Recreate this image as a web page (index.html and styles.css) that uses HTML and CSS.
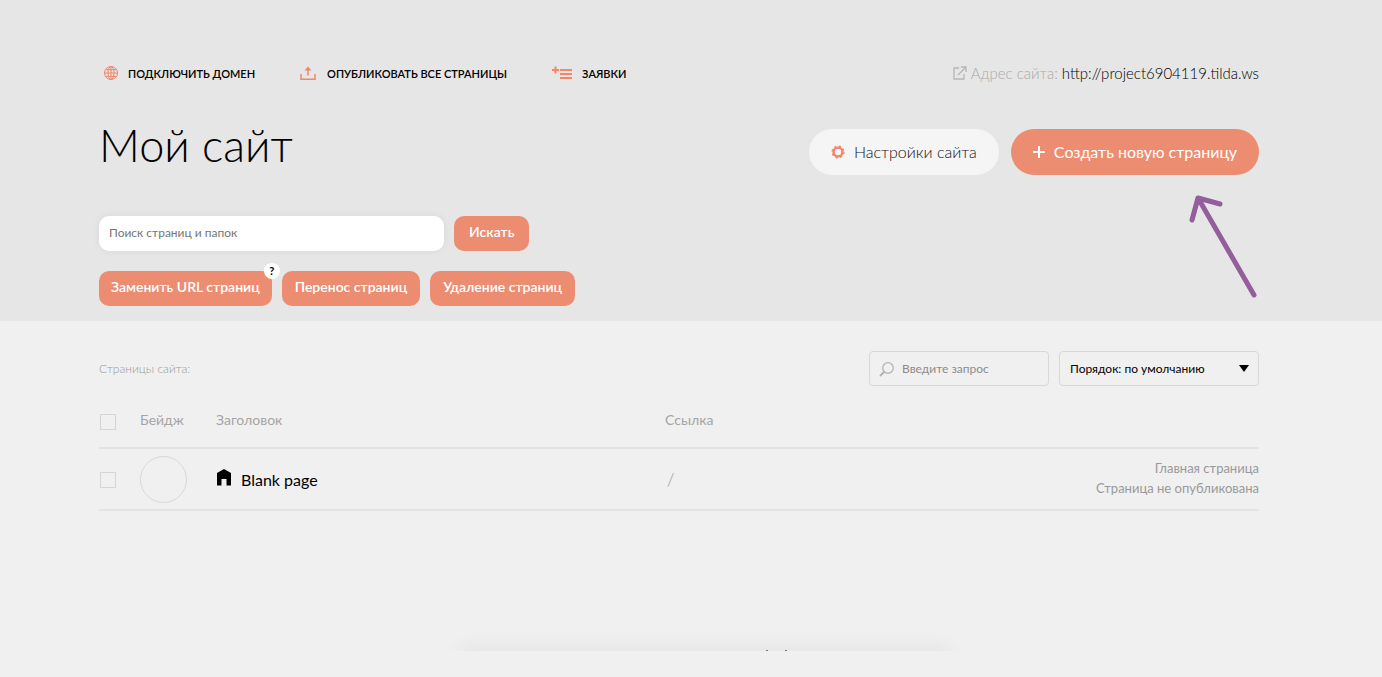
FILE: index.html
```html
<!DOCTYPE html>
<html lang="ru">
<head>
<meta charset="utf-8">
<meta name="viewport" content="width=device-width, initial-scale=1">
<title>Мой сайт</title>
<link rel="stylesheet" href="styles.css">
</head>
<body>
<header class="header">
  <div class="topbar">
    <nav class="nav">
      <a class="nav-link" href="#domain">
        <svg width="24" height="16" viewBox="0 0 24 16" fill="none" stroke="#f0876a"><circle cx="12" cy="8" r="6.500"/><ellipse cx="12" cy="8" rx="3" ry="6.500"/><path d="M12 1.500v13M5.500 8h13M6.500 4.700h11M6.500 11.300h11"/></svg>
        Подключить домен
      </a>
      <a class="nav-link nav-link-publish" href="#publish">
        <svg width="16" height="16" viewBox="0 0 16 16" fill="none" stroke="#f0876a" stroke-width="1.500"><path d="M1 9v5.200h14V9M8 10.500V3"/><path d="M4.500 5.500 8 1.500l3.500 4z" fill="#f0876a" stroke="none"/></svg>
        Опубликовать все страницы
      </a>
      <a class="nav-link nav-link-leads" href="#leads">
        <svg width="20" height="16" viewBox="0 0 20 16" fill="none" stroke="#f58468" stroke-width="2"><path d="M0 5h7M3.500 1.500v7M8 5h12M8 9h12M8 13h12"/></svg>
        Заявки
      </a>
    </nav>
    <div class="address">
      <svg width="14" height="14" viewBox="0 0 14 14" fill="none" stroke="#b6b6b6" stroke-width="1.300"><path d="M6 2H1v11h10V8M8 1h5v5M13 1 5 9"/></svg>
      <span class="address-label">Адрес сайта:</span>
      <a class="address-link" href="http://project6904119.tilda.ws">http://project6904119.tilda.ws</a>
    </div>
  </div>
  <div class="heading">
    <h1 class="title">Мой сайт</h1>
    <div class="actions">
      <button class="pill pill-light" type="button">
        <svg width="14" height="14" viewBox="0 0 14 14" fill="none" stroke="#f58468"><circle cx="7" cy="7" r="4.400" stroke-width="2.400"/><circle cx="7" cy="7" r="5.900" stroke-width="1.200" stroke-dasharray="2.320 2.314"/></svg>
        <span class="pill-text">Настройки сайта</span>
      </button>
      <button class="pill pill-accent" type="button">
        <svg width="12" height="12" viewBox="0 0 12 12" stroke="#fff" stroke-width="2"><path d="M0 6h12M6 0v12"/></svg>
        <span class="pill-text">Создать новую страницу</span>
      </button>
      <svg class="pointer" width="70" height="106" viewBox="0 0 70 106" fill="none" stroke="#935e9b" stroke-width="5" stroke-linecap="round" stroke-linejoin="round"><path d="M65 101 9 4M3 26 9 4l22 6"/></svg>
    </div>
  </div>
  <form class="search">
    <input class="search-input" type="search" aria-label="Поиск страниц и папок" placeholder="Поиск страниц и папок">
    <button class="btn btn-search" type="button">Искать</button>
  </form>
  <div class="tools">
    <div class="tool">
      <button class="btn" type="button">Заменить URL страниц</button>
      <span class="hint">?</span>
    </div>
    <button class="btn btn-wide" type="button">Перенос страниц</button>
    <button class="btn btn-wide" type="button">Удаление страниц</button>
  </div>
</header>
<main class="main">
  <div class="filters">
    <h2 class="subtitle">Страницы сайта:</h2>
    <label class="query">
      <svg width="16" height="16" viewBox="0 0 16 16" fill="none" stroke="#b4b4b4"><circle cx="9" cy="7" r="5.300" stroke-width="1.300"/><path d="M5.500 10.500 1 15" stroke-width="2"/></svg>
      <input class="query-input" type="text" aria-label="Введите запрос" placeholder="Введите запрос">
    </label>
    <div class="order">
      <select class="order-select" aria-label="Порядок"><option>Порядок: по умолчанию</option></select>
      <svg class="order-arrow" width="10" height="7" viewBox="0 0 10 7"><path d="M0 0h10L5 7z"/></svg>
    </div>
  </div>
  <table class="pages">
    <thead>
      <tr><th class="col-check"><input class="check" type="checkbox" aria-label="Выбрать все"></th><th class="col-badge">Бейдж</th><th class="col-title">Заголовок</th><th class="col-link">Ссылка</th><th></th></tr>
    </thead>
    <tbody>
      <tr>
        <td><input class="check" type="checkbox" aria-label="Выбрать страницу"></td>
        <td><div class="badge"></div></td>
        <td><a class="page-link" href="#page"><svg width="14" height="20" viewBox="0 0 14 20"><path d="M0 4 7 0l7 4v12.500H9.500V10h-5v6.500H0z"/></svg>Blank page</a></td>
        <td class="slug">/</td>
        <td class="status">Главная страница<br>Страница не опубликована</td>
      </tr>
    </tbody>
  </table>
</main>
<div class="sheet-edge">
  <div class="sheet-shadow"></div>
  <svg class="sheet-marks" width="24" height="2" viewBox="0 0 24 2" fill="#777"><path d="M1 1h2v1H1zM20 1h2v1h-2z"/></svg>
</div>
</body>
</html>
```
FILE: styles.css
```css
* { box-sizing: border-box; }
body {
  margin: 0;
  min-height: 100vh;
  display: flex;
  flex-direction: column;
  background: #f0f0f0;
  color: #000;
  font-family: Lato, "Open Sans", sans-serif;
  font-size: 14px;
}
a { color: inherit; text-decoration: none; }
button, input, select { font: inherit; }
svg { flex: none; }

.header { padding: 61px 123px 15px 99px; background: #e6e6e6; }
.topbar { display: flex; justify-content: space-between; height: 24px; }
.nav { display: flex; align-items: center; gap: 45px; }
.nav-link {
  display: flex;
  align-items: center;
  gap: 5px;
  font-size: 11px;
  font-weight: 600;
  text-transform: uppercase;
  white-space: nowrap;
}
.nav-link-publish { gap: 11px; }
.nav-link-leads { gap: 10px; }
.address { display: flex; align-items: center; gap: 4px; font-size: 15px; font-weight: 300; white-space: nowrap; }
.address-label { color: #aaa; }

.heading { display: flex; justify-content: space-between; margin-top: 44px; }
.title { margin: 0; font-size: 45px; line-height: 32px; font-weight: 300; white-space: nowrap; }
.actions { position: relative; display: flex; gap: 12px; }
.pill {
  display: flex;
  align-items: center;
  gap: 9px;
  height: 46px;
  padding: 0 22px;
  border: 0;
  border-radius: 23px;
  font-size: 16px;
  font-weight: 300;
  white-space: nowrap;
}
.pill-text { padding-bottom: 2px; }
.pill-light { background: #f5f5f5; color: #111; }
.pill-accent { background: #ec8d72; color: #fff; font-weight: 400; }
.pointer { position: absolute; right: 0; top: 65px; }

.search { display: flex; gap: 10px; margin-top: 41px; }
.search-input {
  width: 345px;
  height: 35px;
  padding: 0 10px 3px;
  border: 0;
  border-radius: 10px;
  background: #fff;
  box-shadow: 0 0 8px rgba(0, 0, 0, .06);
  font-size: 12px;
  appearance: none;
}
.search-input::placeholder { color: #757575; }
.btn {
  height: 35px;
  padding: 0 12px 4px;
  border: 0;
  border-radius: 10px;
  background: #ec8d72;
  color: #fff;
  font-size: 14px;
  font-weight: 600;
  white-space: nowrap;
}
.btn-search { padding: 0 15px 4px; }
.btn-wide { padding: 0 13px 4px; }
.tools { display: flex; gap: 10px; margin-top: 20px; }
.tool { position: relative; }
.hint {
  position: absolute;
  top: -8px;
  right: -8px;
  width: 16px;
  height: 16px;
  border-radius: 50%;
  background: #fff;
  font-size: 11px;
  line-height: 16px;
  font-weight: 700;
  text-align: center;
}

.main { padding: 30px 123px 0 99px; }
.filters { display: flex; align-items: center; gap: 10px; }
.subtitle { margin: 0 auto 0 0; font-size: 12px; font-weight: 300; color: #999; }
.query {
  display: flex;
  align-items: center;
  gap: 7px;
  width: 180px;
  height: 35px;
  padding: 0 9px;
  border: 1px solid #d8d8d8;
  border-radius: 4px;
}
.query-input { flex: 1; min-width: 0; padding: 0; border: 0; background: none; font-size: 12px; outline: 0; }
.query-input::placeholder { color: #8c8c8c; }
.order { position: relative; }
.order-select {
  display: block;
  width: 200px;
  height: 35px;
  padding: 0 10px;
  border: 1px solid #d8d8d8;
  border-radius: 4px;
  background: none;
  color: #000;
  font-size: 12px;
  appearance: none;
}
.order-arrow { position: absolute; right: 10px; top: 14px; pointer-events: none; }

.pages { width: 100%; margin-top: 11px; border-collapse: collapse; table-layout: fixed; }
.pages th { height: 51px; padding: 0 0 6px; border-bottom: 2px solid #e3e3e3; color: #a5a5a5; font-size: 14px; font-weight: 400; text-align: left; }
.pages td { height: 62px; padding: 0; border-bottom: 2px solid #e3e3e3; }
.col-check { width: 41px; }
.col-badge { width: 76px; }
.col-title { width: 449px; }
.check { appearance: none; display: block; width: 16px; height: 16px; margin: 2px 0 0 1px; border: 1px solid #d5d5d5; }
th .check { margin-top: 5px; }
.badge { width: 47px; height: 47px; border: 1px solid #d8d8d8; border-radius: 50%; }
.page-link { display: flex; align-items: center; gap: 10px; padding-left: 1px; font-size: 16px; }
.pages .slug { padding-left: 2px; color: #999; font-size: 17px; font-weight: 300; }
.pages .status { padding-bottom: 2px; color: #999; font-size: 13px; line-height: 20px; text-align: right; }

.sheet-edge { position: relative; height: 26px; margin: auto 0 26px; padding-left: 28px; overflow: hidden; }
.sheet-shadow { width: 490px; height: 20px; margin: 26px auto 0; box-shadow: 0 0 24px rgba(0, 0, 0, .08); }
.sheet-marks { position: absolute; left: 765px; bottom: 0; }
```
